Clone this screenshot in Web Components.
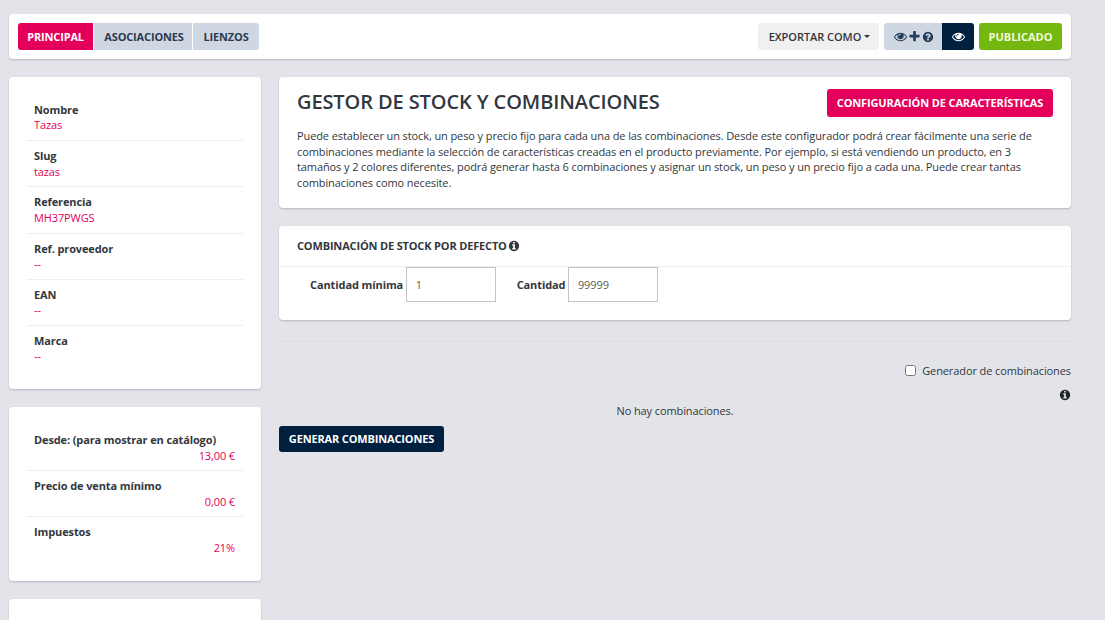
<!DOCTYPE html>
<html lang="es"><head><meta charset="utf-8"><title>Stock</title>
<style>
html,body{margin:0;height:620px;overflow:hidden;background:#e2e4ea;font:11px/15.71px "Open Sans",sans-serif;color:#32373d;letter-spacing:-.1px}
</style></head><body>
<app-page></app-page>
<script>
const P={
eye:'M1664 960q-152-236-381-353 61 104 61 225 0 185-131.500 316.500t-316.500 131.500-316.500-131.500-131.500-316.500q0-121 61-225-229 117-381 353 133 205 333.500 326.500t434.500 121.500 434.500-121.500 333.500-326.500zm-720-384q0-20-14-34t-34-14q-125 0-214.500 89.500t-89.500 214.500q0 20 14 34t34 14 34-14 14-34q0-86 61-147t147-61q20 0 34-14t14-34zm848 384q0 34-20 69-140 230-376.500 368.500t-499.500 138.500-499.500-139-376.500-368q-20-35-20-69t20-69q140-229 376.500-368t499.500-139 499.500 139 376.500 368q20 35 20 69z',
info:'M1152 1376v-160q0-14-9-23t-23-9h-96v-512q0-14-9-23t-23-9h-320q-14 0-23 9t-9 23v160q0 14 9 23t23 9h96v320h-96q-14 0-23 9t-9 23v160q0 14 9 23t23 9h448q14 0 23-9t9-23zm-128-896v-160q0-14-9-23t-23-9h-192q-14 0-23 9t-9 23v160q0 14 9 23t23 9h192q14 0 23-9t9-23zm640 416q0 209-103 385.500t-279.500 279.500-385.500 103-385.500-103-279.500-279.500-103-385.500 103-385.500 279.500-279.500 385.500-103 385.500 103 279.500 279.500 103 385.500z',
q:'M1024 1376v-192q0-14-9-23t-23-9h-192q-14 0-23 9t-9 23v192q0 14 9 23t23 9h192q14 0 23-9t9-23zm256-672q0-88-55.500-163t-138.500-116-170-41q-243 0-371 213-15 24 8 42l132 100q7 6 19 6 16 0 25-12 53-68 86-92 34-24 86-24 48 0 85.500 26t37.500 59q0 38-20 61t-68 45q-63 28-115.500 86.500t-52.500 125.500v36q0 14 9 23t23 9h192q14 0 23-9t9-23q0-19 21.500-49.500t54.500-49.500q32-18 49-28.500t46-35 44.500-48 28-60.500 12.500-81zm384 192q0 209-103 385.500t-279.500 279.500-385.500 103-385.500-103-279.500-279.500-103-385.500 103-385.500 279.500-279.500 385.500-103 385.500 103 279.500 279.500 103 385.500z',
plus:'M1600 736v192q0 40-28 68t-68 28h-416v416q0 40-28 68t-68 28h-192q-40 0-68-28t-28-68v-416h-416q-40 0-68-28t-28-68v-192q0-40 28-68t68-28h416v-416q0-40 28-68t68-28h192q40 0 68 28t28 68v416h416q40 0 68 28t28 68z'};
function def(name,css,html,init){customElements.define(name,class extends HTMLElement{connectedCallback(){if(this.shadowRoot)return;const s=this.attachShadow({mode:'open'});s.innerHTML='<style>'+css+'</style>'+(typeof html==='function'?html(this):html);if(init)init(this,s);}});}
def('fa-icon',':host{display:inline-block;line-height:0;vertical-align:middle}svg{display:block;fill:currentColor}',
 h=>{const z=h.getAttribute('size')||13;return `<svg width="${z}" height="${z}" viewBox="0 0 1792 1792"><path d="${P[h.getAttribute('name')]}"/></svg>`});
def('ui-card',':host{display:block;background:#fff;border-radius:4px;box-shadow:0 1px 2px rgba(0,0,0,.2)}','<slot></slot>');
def('ui-btn',`:host{display:inline-flex;align-items:center;justify-content:center;box-sizing:border-box;height:27px;padding:0 10px;font-weight:700;font-size:11px;letter-spacing:var(--ls,-.15px);text-transform:uppercase;white-space:nowrap;background:var(--bg,#cfd7e3);color:var(--fg,#2c3a50);border-radius:var(--r,3px);gap:var(--g,0)}`,'<slot></slot>');
def('info-row',`:host{display:block;padding:7px 7px 6.8px;border-bottom:1px solid #eceef1;letter-spacing:-.12px}:host(:last-child){border-bottom:0}
 :host([end]){padding-bottom:6.8px}
 .l{font-weight:700;color:#32373d}.v{color:#e4005a;margin-top:-.3px;margin-bottom:.3px}:host([end]) .v{text-align:right;padding-right:1px;margin:.2px 0 -.2px}`,
 h=>`<div class="l">${h.getAttribute('label')}</div><div class="v">${h.getAttribute('value')}</div>`);
def('info-list',':host{display:block;padding:18px;}','<slot></slot>');
def('num-field',`:host{display:inline-flex;align-items:center;gap:3px}
 label{font-weight:700;padding-top:1px}
 input{box-sizing:border-box;height:35px;border:1px solid #c4c4c4;border-radius:0;padding:0 9px 0 8.5px;font:11px "Open Sans",sans-serif;letter-spacing:-.1px;color:#5c5c4f;width:var(--w,90px);background:#fff;outline:0}`,
 h=>`<label>${h.getAttribute('label')}</label><input value="${h.getAttribute('value')}">`);
def('top-bar',`:host{display:flex;align-items:center;justify-content:space-between;padding:9px}
 .g{display:flex;align-items:center}`,
 `<div class="g" style="gap:1px"><ui-btn style="--bg:#e4005a;--fg:#fff;--r:3px 0 0 3px;width:75px">Principal</ui-btn><ui-btn style="--r:0;width:98px;padding-left:11px;padding-right:9px">Asociaciones</ui-btn><ui-btn style="--r:0 3px 3px 0;width:66px">Lienzos</ui-btn></div>
 <div class="g"><ui-btn style="--bg:#f0f0f0;--fg:#32373d;--ls:-.05px;width:121px;font-weight:600;padding-left:11px;padding-right:9px">Exportar como<span style="display:inline-block;margin-left:3px;border:3px solid transparent;border-top-color:#32373d;border-bottom:0"></span></ui-btn>
 <ui-btn style="--r:3px 0 0 3px;--fg:#25405f;--g:1px;width:58px;margin-left:5px;padding:0 0 0 1px"><fa-icon name="eye" size="13"></fa-icon><fa-icon name="plus" size="13"></fa-icon><fa-icon name="q" size="12"></fa-icon></ui-btn>
 <ui-btn style="--bg:#00203f;--fg:#fff;--r:0 3px 3px 0;width:32px;padding:0"><fa-icon name="eye" size="13"></fa-icon></ui-btn>
 <ui-btn style="--bg:#74b70f;--fg:#f2fbd8;--ls:0;width:83px;margin-left:5px">Publicado</ui-btn></div>`);
def('intro-card',`:host{display:block}ui-card{padding:12px 18px 17px}
 .h{display:flex;justify-content:space-between;align-items:flex-start}
 h1{margin:0;font-size:20px;line-height:26px;font-weight:600;color:#32373d;letter-spacing:-.1px}
 p{margin:11px 0 0;color:#32373d}`,
 `<ui-card><div class="h"><h1>GESTOR DE STOCK Y COMBINACIONES</h1><ui-btn style="--bg:#e4005a;--fg:#fff;--ls:-.125px;height:28px;width:226px">Configuración de características</ui-btn></div>
 <p>Puede establecer un stock, un peso y precio fijo para cada una de las combinaciones. Desde este configurador podrá crear fácilmente una serie de<br>combinaciones mediante la selección de características creadas en el producto previamente. Por ejemplo, si está vendiendo un producto, en 3<br>tamaños y 2 colores diferentes, podrá generar hasta 6 combinaciones y asignar un stock, un peso y un precio fijo a cada una. Puede crear tantas<br>combinaciones como necesite.</p></ui-card>`);
def('default-card',`:host{display:block}ui-card{height:94px}
 .t{height:41px;box-sizing:border-box;border-bottom:1px solid #eceef1;display:flex;align-items:center;padding:0 18px;font-weight:700;font-size:11px;letter-spacing:-.16px;gap:1px}
 .f{display:flex;padding:0 0 0 31px;gap:20.5px}`,
 `<ui-card><div class="t">COMBINACIÓN DE STOCK POR DEFECTO <fa-icon name="info" size="12"></fa-icon></div>
 <div class="f"><num-field label="Cantidad mínima" value="1"></num-field><num-field label="Cantidad" value="99999"></num-field></div></ui-card>`);
def('combo-panel',`:host{display:block}hr{border:0;border-top:1px solid #e9ebef;margin:18px 0 0}
 .c{display:flex;justify-content:flex-end;align-items:center;margin-top:24px;gap:6px;height:16px}
 .box{box-sizing:border-box;width:11px;height:11px;margin:0;appearance:auto}
 .i{display:flex;justify-content:flex-end;margin-top:10px;height:12px;color:#1f2328}
 .n{text-align:center;margin-top:2px}
 ui-btn{margin-top:7px;height:26px;width:165px;--bg:#00203f;--fg:#fff}`,
 `<hr><div class="c"><input class="box" type="checkbox"><span>Generador de combinaciones</span></div>
 <div class="i"><fa-icon name="info" size="12"></fa-icon></div>
 <div class="n">No hay combinaciones.</div><ui-btn>Generar combinaciones</ui-btn>`);
def('app-page',`:host{display:block;box-sizing:border-box;width:1105px;height:620px;padding:14px 34px 0 9px;overflow:hidden}
 .m{display:grid;grid-template-columns:252px 792px;gap:18px;margin-top:18px}
 .s,.r{display:flex;flex-direction:column;gap:18px}.r{gap:0}
 default-card{margin-top:18px}`,
 `<ui-card><top-bar></top-bar></ui-card>
 <div class="m"><div class="s">
 <ui-card style="height:312px"><info-list><info-row label="Nombre" value="Tazas"></info-row><info-row label="Slug" value="tazas"></info-row><info-row label="Referencia" value="MH37PWGS"></info-row><info-row label="Ref. proveedor" value="--"></info-row><info-row label="EAN" value="--"></info-row><info-row label="Marca" value="--"></info-row></info-list></ui-card>
 <ui-card style="height:174px"><info-list><info-row end label="Desde: (para mostrar en catálogo)" value="13,00 €"></info-row><info-row end label="Precio de venta mínimo" value="0,00 €"></info-row><info-row end label="Impuestos" value="21%"></info-row></info-list></ui-card>
 <ui-card style="height:60px"></ui-card>
 </div><div class="r"><intro-card></intro-card><default-card></default-card><combo-panel></combo-panel></div></div>`);
</script></body></html>
